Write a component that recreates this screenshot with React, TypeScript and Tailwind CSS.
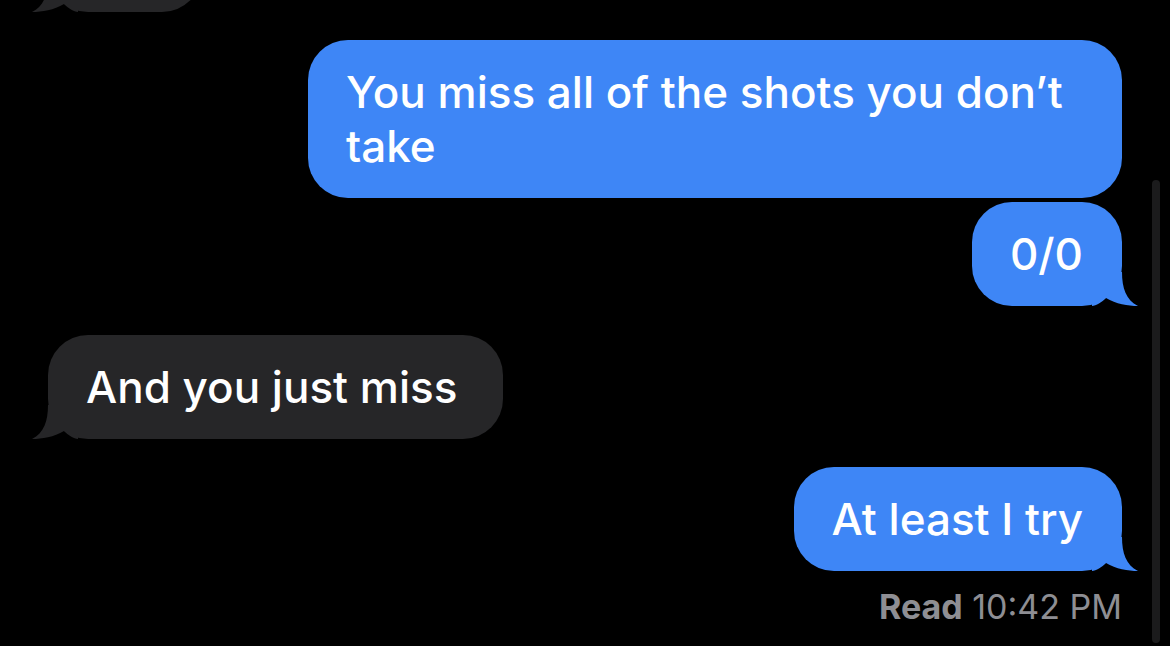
const messages = [
  { id: 1, from: "me", text: "You miss all of the shots you don’t take", tail: false },
  { id: 2, from: "me", text: "0/0", tail: true },
  { id: 3, from: "them", text: "And you just miss", tail: true },
  { id: 4, from: "me", text: "At least I try", tail: true },
];

const Tail = ({ side, color }: { side: "left" | "right"; color: string }) => (
  <svg
    width="46"
    height="34"
    viewBox="0 0 46 34"
    className={
      side === "right"
        ? "absolute bottom-0 right-[-16px]"
        : "absolute bottom-0 left-[-16px] -scale-x-100"
    }
  >
    <path d="M0 0H30C30 16 34 28 46 34C36 34 24 32 14 26C10 30 4 34 0 34Z" fill={color} />
  </svg>
);

const Bubble = ({ from, text, tail }: { from: string; text: string; tail: boolean }) => {
  const mine = from === "me";
  return (
    <div className={`flex ${mine ? "justify-end" : "justify-start"}`}>
      <div
        className={`relative max-w-[814px] rounded-[40px] py-[25px] pl-[38px] text-[44px] font-medium leading-[54px] text-white ${
          mine ? "bg-[#3e86f6] pr-[39px]" : "bg-[#262628] pr-[46px]"
        }`}
      >
        {tail && <Tail side={mine ? "right" : "left"} color={mine ? "#3e86f6" : "#262628"} />}
        <span className="relative">{text}</span>
      </div>
    </div>
  );
};

export default function App() {
  return (
    <div
      className="relative h-[646px] w-[1170px] overflow-hidden bg-black"
      style={{ fontFamily: "Inter, 'Noto Sans', sans-serif" }}
    >
      <div className="flex flex-col px-[48px]">
        {/* previous message, scrolled mostly out of view */}
        <div className="-mt-[92px] flex justify-start">
          <div className="relative h-[104px] w-[154px] rounded-[40px] bg-[#262628]">
            <Tail side="left" color="#262628" />
          </div>
        </div>

        <div className="mt-[28px]">
          <Bubble {...messages[0]} />
        </div>
        <div className="mt-[4px]">
          <Bubble {...messages[1]} />
        </div>
        <div className="mt-[29px]">
          <Bubble {...messages[2]} />
        </div>
        <div className="mt-[28px]">
          <Bubble {...messages[3]} />
        </div>

        <div className="mt-[16px] text-right text-[34px] leading-[40px] text-[#8e8e93]">
          <span className="font-bold">Read</span> 10:42 PM
        </div>
      </div>

      {/* scroll indicator */}
      <div className="absolute left-[1152px] top-[180px] h-[463px] w-[8px] rounded-full bg-[#1b1b1c]" />
    </div>
  );
}
